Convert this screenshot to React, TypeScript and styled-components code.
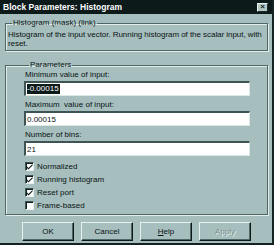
import React from "react";
import styled, { createGlobalStyle } from "styled-components";

const Global = createGlobalStyle`
  html, body { margin: 0; padding: 0; background: #a6bebd; }
  * { box-sizing: border-box; }
`;

const BG = "#a6bebd";
const DARK = "#4e6666";
const LIGHT = "#e2eeea";
const FONT = `"Liberation Sans", Arial, sans-serif`;

const Window = styled.div`
  width: 274px;
  height: 245px;
  background: ${BG};
  font-family: ${FONT};
  font-size: 8px;
  color: #0a1414;
  display: flex;
  flex-direction: column;
  border-right: 2px solid #142222;
  border-bottom: 2px solid #142222;
  overflow: hidden;
`;

const TitleBar = styled.div`
  height: 14px;
  flex: none;
  background: #0c1a1a;
  display: flex;
  align-items: center;
  justify-content: space-between;
  padding: 0 4px 0 3px;
`;

const Title = styled.span`
  color: #ffffff;
  font-weight: bold;
  font-size: 8.5px;
`;

const CloseButton = styled.div`
  width: 11px;
  height: 9px;
  background: #b4c8c6;
  border: 1px solid;
  border-color: #e8f2ef #1a2a2a #1a2a2a #e8f2ef;
  display: flex;
  align-items: center;
  justify-content: center;
  font-size: 8px;
  font-weight: bold;
  line-height: 1;
  color: #102020;
`;

const Body = styled.div`
  display: flex;
  flex-direction: column;
  padding: 0 4px 0 5px;
`;

const Group = styled.fieldset<{ $top: number; $pl: number; $pt: number; $pb: number }>`
  margin: ${(p) => p.$top}px 0 0 0;
  padding: ${(p) => p.$pt}px 1px ${(p) => p.$pb}px ${(p) => p.$pl}px;
  border: 1px solid ${DARK};
  box-shadow: 1px 1px 0 ${LIGHT}, inset 1px 1px 0 ${LIGHT};
  min-width: 0;
`;

const Legend = styled.legend`
  font-size: 8px;
  line-height: 10px;
  padding: 0 1px;
  margin-left: 4px;
`;

const Desc = styled.div`
  line-height: 9px;
  font-size: 8px;
  white-space: nowrap;
  letter-spacing: -0.05px;
`;

const Label = styled.div<{ $mt: number }>`
  margin-top: ${(p) => p.$mt}px;
  line-height: 10px;
  height: 10px;
`;

const Input = styled.div`
  margin-top: 1px;
  width: 226px;
  height: 15px;
  background: #ffffff;
  border-top: 2px solid #3e5454;
  border-left: 2px solid #3e5454;
  border-right: 1px solid #dce8e2;
  border-bottom: 1px solid #dce8e2;
  display: flex;
  align-items: center;
  padding-left: 1px;
  margin-left: -1px;
  font-size: 8px;
`;

const Selected = styled.span`
  background: #0c1a1a;
  color: #ffffff;
  line-height: 10px;
  padding: 0 1px 0 0;
`;

const Checks = styled.div`
  margin-top: 4px;
  display: flex;
  flex-direction: column;
`;

const CheckRow = styled.div`
  height: 13px;
  display: flex;
  align-items: center;
  gap: 3px;
`;

const Box = styled.div`
  width: 9px;
  height: 9px;
  background: #ffffff;
  border-top: 1px solid #3e5454;
  border-left: 1px solid #3e5454;
  border-right: 1px solid #e6f0ec;
  border-bottom: 1px solid #e6f0ec;
  box-shadow: inset 1px 1px 0 #102020;
  display: flex;
  align-items: center;
  justify-content: center;
`;

const Buttons = styled.div`
  margin-top: 7px;
  padding-left: 17px;
  display: flex;
  gap: 7px;
`;

const Button = styled.div<{ $disabled?: boolean }>`
  width: 52px;
  height: 19px;
  display: flex;
  align-items: center;
  justify-content: center;
  background: ${BG};
  border: 1px solid;
  border-color: #e6f0ec #0c1a1a #0c1a1a #e6f0ec;
  box-shadow: inset -1px -1px 0 ${DARK};
  font-size: 8px;
  color: ${(p) => (p.$disabled ? "#7c9292" : "#0a1414")};
  text-shadow: ${(p) => (p.$disabled ? `1px 1px 0 ${LIGHT}` : "none")};
`;

const Check = () => (
  <svg width="7" height="7" viewBox="0 0 7 7">
    <path d="M0.5 3 L2.5 5 L6.5 1 L6.5 2.5 L2.5 6.5 L0.5 4.5 Z" fill="#0a1414" />
  </svg>
);

const checks = [
  { label: "Normalized", on: true },
  { label: "Running histogram", on: true },
  { label: "Reset port", on: true },
  { label: "Frame-based", on: false },
];

export default function App() {
  return (
    <>
      <Global />
      <Window>
        <TitleBar>
          <Title>Block Parameters: Histogram</Title>
          <CloseButton>×</CloseButton>
        </TitleBar>
        <Body>
          <Group $top={4} $pl={2} $pt={2} $pb={2}>
            <Legend>Histogram (mask) (link)</Legend>
            <Desc>
              Histogram of the input vector. Running histogram of the scalar input, with
              <br />
              reset.
            </Desc>
          </Group>
          <Group $top={9} $pl={19} $pt={0} $pb={2}>
            <Legend>Parameters</Legend>
            <Label $mt={0}>Minimum value of input:</Label>
            <Input>
              <Selected>-0.00015</Selected>
            </Input>
            <Label $mt={4}>Maximum &nbsp;value of input:</Label>
            <Input>0.00015</Input>
            <Label $mt={4}>Number of bins:</Label>
            <Input>21</Input>
            <Checks>
              {checks.map((c) => (
                <CheckRow key={c.label}>
                  <Box>{c.on && <Check />}</Box>
                  <span>{c.label}</span>
                </CheckRow>
              ))}
            </Checks>
          </Group>
          <Buttons>
            <Button>OK</Button>
            <Button>Cancel</Button>
            <Button>
              <span>
                <u>H</u>elp
              </span>
            </Button>
            <Button $disabled>Apply</Button>
          </Buttons>
        </Body>
      </Window>
    </>
  );
}
